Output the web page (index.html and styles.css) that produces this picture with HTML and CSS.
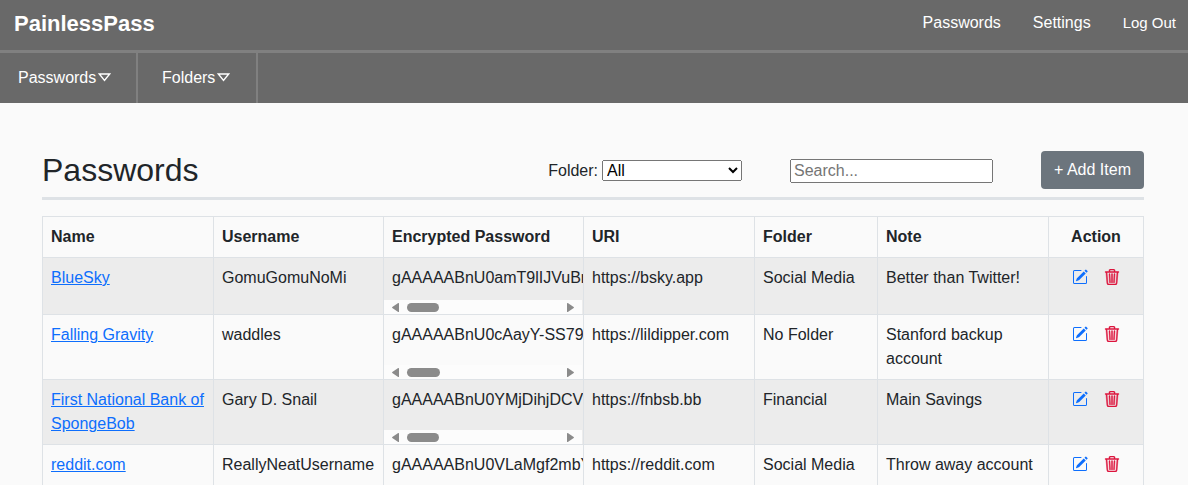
FILE: index.html
```html
<!DOCTYPE html>
<html lang="en">
<head>
<meta charset="utf-8">
<title>PainlessPass</title>
<link rel="stylesheet" href="styles.css">
</head>
<body>
<svg class="defs" aria-hidden="true">
  <symbol id="edit" viewBox="0 0 16 16">
    <path d="M15.502 1.94a.5.5 0 0 1 0 .706L14.459 3.69l-2-2L13.502.646a.5.5 0 0 1 .707 0l1.293 1.293zm-1.75 2.456-2-2L4.939 9.21a.5.5 0 0 0-.121.196l-.805 2.414a.25.25 0 0 0 .316.316l2.414-.805a.5.5 0 0 0 .196-.12l6.813-6.814z"/>
    <path fill-rule="evenodd" d="M1 13.5A1.5 1.5 0 0 0 2.5 15h11a1.5 1.5 0 0 0 1.5-1.5v-6a.5.5 0 0 0-1 0v6a.5.5 0 0 1-.5.5h-11a.5.5 0 0 1-.5-.5v-11a.5.5 0 0 1 .5-.5H9a.5.5 0 0 0 0-1H2.5A1.5 1.5 0 0 0 1 2.5z"/>
  </symbol>
  <symbol id="trash" viewBox="0 0 16 16">
    <path d="M6.5 1h3a.5.5 0 0 1 .5.5v1H6v-1a.5.5 0 0 1 .5-.5M11 2.5v-1A1.5 1.5 0 0 0 9.5 0h-3A1.5 1.5 0 0 0 5 1.5v1H1.5a.5.5 0 0 0 0 1h.538l.853 10.66A2 2 0 0 0 4.885 16h6.23a2 2 0 0 0 1.994-1.84l.853-10.66h.538a.5.5 0 0 0 0-1zm1.958 1-.846 10.58a1 1 0 0 1-.997.92h-6.23a1 1 0 0 1-.997-.92L3.042 3.5zm-7.487 1a.5.5 0 0 1 .528.47l.5 8.5a.5.5 0 0 1-.998.06L5 5.03a.5.5 0 0 1 .47-.53Zm5.058 0a.5.5 0 0 1 .47.53l-.5 8.5a.5.5 0 1 1-.998-.06l.5-8.5a.5.5 0 0 1 .528-.47M8 4.5a.5.5 0 0 1 .5.5v8.5a.5.5 0 0 1-1 0V5a.5.5 0 0 1 .5-.5"/>
  </symbol>
  <symbol id="left" viewBox="0 0 7 9"><path d="M6.2.1Q7-.2 7 .6v7.8q0 .8-.8.5L.3 5Q-.2 4.5.3 4z"/></symbol>
  <symbol id="right" viewBox="0 0 7 9"><path d="M.8.1Q0-.2 0 .6v7.8q0 .8.8.5L6.7 5Q7.2 4.5 6.7 4z"/></symbol>
  <symbol id="down" viewBox="0 0 13 9"><path d="M1.3 1h10.4L6.5 7.5z" fill="none" stroke="currentColor" stroke-width="1.4"/></symbol>
</svg>
<header class="topbar">
  <a class="brand">PainlessPass</a>
  <nav class="links"><a>Passwords</a><a>Settings</a><a class="logout">Log Out</a></nav>
</header>
<nav class="subnav">
  <a class="tab tab-passwords">Passwords<svg class="caret"><use href="#down"/></svg></a>
  <a class="tab tab-folders">Folders<svg class="caret"><use href="#down"/></svg></a>
</nav>
<main class="content">
  <div class="toolbar">
    <h1 class="title">Passwords</h1>
    <label class="filter"><span class="filter-text">Folder:</span> <select class="select"><option>All</option></select></label>
    <input class="search" type="text" placeholder="Search...">
    <button class="add">+ Add Item</button>
  </div>
  <table class="table">
    <colgroup><col class="c-name"><col class="c-user"><col class="c-pass"><col class="c-uri"><col class="c-folder"><col class="c-note"><col class="c-action"></colgroup>
    <thead>
      <tr class="head"><th>Name</th><th>Username</th><th>Encrypted Password</th><th>URI</th><th>Folder</th><th>Note</th><th class="action-head">Action</th></tr>
    </thead>
    <tbody>
      <tr class="row short odd">
        <td><a class="link" href="#">BlueSky</a></td><td>GomuGomuNoMi</td>
        <td class="secret"><div class="secret-box"><span class="cipher">gAAAAABnU0amT9lIJVuBn</span><div class="scroll"><svg class="arrow"><use href="#left"/></svg><span class="thumb"></span><svg class="arrow end"><use href="#right"/></svg></div></div></td>
        <td>https://bsky.app</td><td>Social Media</td><td>Better than Twitter!</td>
        <td><div class="actions"><svg class="icon edit"><use href="#edit"/></svg><svg class="icon trash"><use href="#trash"/></svg></div></td>
      </tr>
      <tr class="row">
        <td><a class="link" href="#">Falling Gravity</a></td><td>waddles</td>
        <td class="secret"><div class="secret-box"><span class="cipher">gAAAAABnU0cAayY-SS79</span><div class="scroll"><svg class="arrow"><use href="#left"/></svg><span class="thumb wide"></span><svg class="arrow end"><use href="#right"/></svg></div></div></td>
        <td>https://lildipper.com</td><td>No Folder</td><td>Stanford backup account</td>
        <td><div class="actions"><svg class="icon edit"><use href="#edit"/></svg><svg class="icon trash"><use href="#trash"/></svg></div></td>
      </tr>
      <tr class="row odd">
        <td><a class="link" href="#">First National Bank of SpongeBob</a></td><td>Gary D. Snail</td>
        <td class="secret"><div class="secret-box"><span class="cipher">gAAAAABnU0YMjDihjDCV</span><div class="scroll"><svg class="arrow"><use href="#left"/></svg><span class="thumb"></span><svg class="arrow end"><use href="#right"/></svg></div></div></td>
        <td>https://fnbsb.bb</td><td>Financial</td><td>Main Savings</td>
        <td><div class="actions"><svg class="icon edit"><use href="#edit"/></svg><svg class="icon trash"><use href="#trash"/></svg></div></td>
      </tr>
      <tr class="row">
        <td><a class="link" href="#">reddit.com</a></td><td>ReallyNeatUsername</td>
        <td class="secret"><div class="secret-box"><span class="cipher">gAAAAABnU0VLaMgf2mbY</span></div></td>
        <td>https://reddit.com</td><td>Social Media</td><td>Throw away account</td>
        <td><div class="actions"><svg class="icon edit"><use href="#edit"/></svg><svg class="icon trash"><use href="#trash"/></svg></div></td>
      </tr>
    </tbody>
  </table>
</main>
</body>
</html>
```
FILE: styles.css
```css
* { box-sizing: border-box; }
html { overflow: hidden; }
body {
  margin: 0;
  height: 485px;
  overflow: hidden;
  background: #fafafa;
  color: #212529;
  font: 16px/24px "Liberation Sans", Arial, sans-serif;
}
.defs { display: none; }
.topbar {
  display: flex;
  justify-content: space-between;
  height: 53px;
  padding: 0 12px 0 14px;
  border-bottom: 3px solid #808080;
  background: #696969;
  color: #fff;
}
.brand { font-size: 22px; font-weight: 700; line-height: 47px; }
.links { display: flex; gap: 32px; line-height: 45px; }
.logout { font-size: 15px; line-height: 45px; }
.subnav { display: flex; height: 50px; background: #696969; color: #fff; }
.tab {
  display: flex;
  align-items: center;
  border-right: 2px solid #808080;
}
.tab-passwords { width: 138px; padding-left: 18px; }
.tab-folders { width: 120px; padding-left: 24px; }
.caret { width: 13px; height: 9px; margin: 0 0 2px 2px; }
.content { height: 382px; padding: 48px 44px 0 42px; overflow: hidden; }
.toolbar {
  display: flex;
  align-items: center;
  width: 1102px;
  height: 49px;
  padding-bottom: 8px;
  border-bottom: 3px solid #dee2e6;
}
.title { flex: 1; margin: 0; font-size: 32px; font-weight: 400; line-height: 38px; }
.filter { display: flex; align-items: center; gap: 4px; margin-right: 48px; }
.filter-text { padding-top: 2px; }
.select {
  width: 140px;
  height: 21px;
  font: 16px "Liberation Sans", Arial, sans-serif;
}
.search {
  width: 203px;
  height: 24px;
  margin: 1px 48px 0 0;
  font: 16px "Liberation Sans", Arial, sans-serif;
}
.add {
  width: 103px;
  height: 38px;
  padding: 0;
  border: 0;
  border-radius: 4px;
  background: #6c757d;
  color: #fff;
  font: 16px/24px "Liberation Sans", Arial, sans-serif;
}
.table {
  width: 1102px;
  margin-top: 16px;
  table-layout: fixed;
  border-collapse: separate;
  border-spacing: 0;
  border: solid #dee2e6;
  border-width: 1px 0 0 1px;
}
.c-name, .c-uri, .c-note { width: 171px; }
.c-user { width: 170px; }
.c-pass { width: 200px; }
.c-folder { width: 123px; }
.c-action { width: 95px; }
th, td {
  padding: 8px;
  border: solid #dee2e6;
  border-width: 0 1px 1px 0;
  text-align: left;
  vertical-align: top;
}
th { white-space: nowrap; }
.head { height: 41px; }
.row { height: 65px; }
.short { height: 57px; }
.odd { background: #ececec; }
th.action-head { text-align: center; }
.link { color: #0d6efd; text-decoration: underline; }
td.secret { padding: 0; }
.secret-box {
  display: flex;
  flex-direction: column;
  justify-content: space-between;
  height: 64px;
  padding-top: 8px;
  overflow: hidden;
}
.short .secret-box { height: 56px; }
.cipher { padding-left: 8px; white-space: nowrap; }
.scroll {
  display: flex;
  align-items: center;
  width: 198px;
  height: 14px;
  padding: 0 8px;
  background: #fcfcfc;
}
.arrow { width: 7px; height: 9px; fill: #8b8b8b; }
.end { margin-left: auto; }
.thumb { width: 32px; height: 9px; margin-left: 8px; border-radius: 5px; background: #8b8b8b; }
.wide { width: 33px; }
.actions { display: flex; justify-content: center; gap: 16px; padding-top: 3px; }
.icon { width: 16px; height: 16px; fill: currentColor; }
.edit { color: #0d6efd; }
.trash { color: #dc143c; stroke: currentColor; stroke-width: 0.5; }
```
